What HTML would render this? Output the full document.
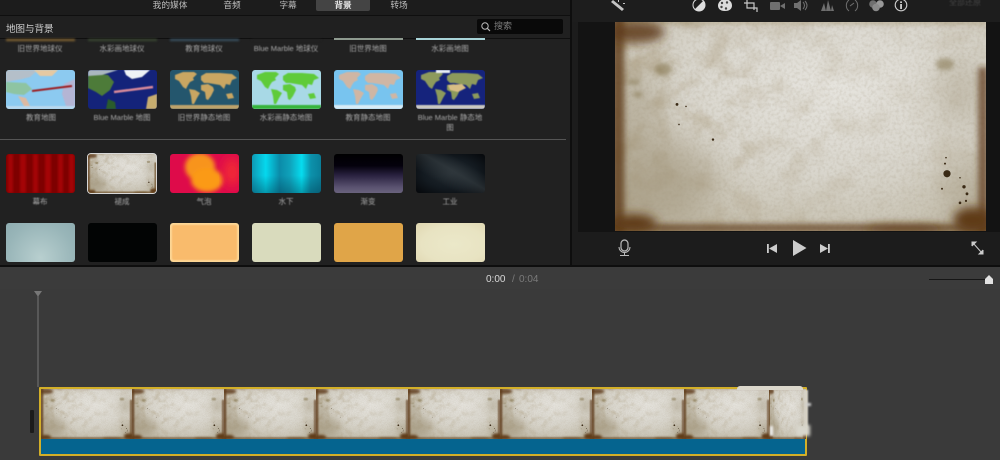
<!DOCTYPE html>
<html>
<head>
<meta charset="utf-8">
<style>
html,body{margin:0;padding:0;background:#3a3a3a}
#r{position:relative;width:1000px;height:460px;overflow:hidden;background:#3a3a3a;font-family:"Liberation Sans","Noto Sans CJK SC",sans-serif}
#r div,#r svg,#r span{position:absolute}
.t{color:#bdbdbd;font-size:8.7px;line-height:10px;text-align:center;white-space:nowrap;filter:blur(.35px)}
.c{width:88px;text-align:center;color:#a9a9a9;font-size:7.5px;line-height:10px;filter:blur(.4px)}
.th{width:69px;height:39px;border-radius:3px;overflow:hidden}
.th svg{filter:blur(.5px)}
svg{display:block}
</style>
</head>
<body>
<div id="r">
<svg width="0" height="0" style="left:0;top:0">
<defs>
<filter id="b2"><feGaussianBlur stdDeviation="2"/></filter>
<filter id="b3" x="-20%" y="-20%" width="140%" height="140%"><feGaussianBlur stdDeviation="3"/></filter>
<filter id="b5" x="-30%" y="-30%" width="160%" height="160%"><feGaussianBlur stdDeviation="5"/></filter>
<filter id="b18" x="-50%" y="-50%" width="200%" height="200%"><feGaussianBlur stdDeviation="18"/></filter>
<filter id="g" x="0" y="0" width="100%" height="100%"><feTurbulence type="fractalNoise" baseFrequency=".32" numOctaves="2" seed="5"/><feColorMatrix values="0 0 0 0 .38 0 0 0 0 .33 0 0 0 0 .24 1.3 0 0 0 -.52"/></filter>
<filter id="g2" x="0" y="0" width="100%" height="100%"><feTurbulence type="fractalNoise" baseFrequency=".035" numOctaves="4" seed="11"/><feColorMatrix values="0 0 0 0 .45 0 0 0 0 .38 0 0 0 0 .26 3 0 0 0 -1.35"/></filter>
<linearGradient id="lf"><stop offset="0" stop-color="#fff"/><stop offset=".45" stop-color="#666"/><stop offset=".75" stop-color="#333"/><stop offset="1" stop-color="#555"/></linearGradient>
<mask id="lm"><rect width="371" height="208" fill="url(#lf)"/></mask>
<radialGradient id="pg" cx=".58" cy=".32" r=".72"><stop offset="0" stop-color="#e6e4de"/><stop offset=".55" stop-color="#d9d6cd"/><stop offset="1" stop-color="#c5bfae"/></radialGradient>
<symbol id="paper" viewBox="0 0 371 208" preserveAspectRatio="none">
<rect width="371" height="208" fill="url(#pg)"/>
<g mask="url(#lm)"><rect width="371" height="208" filter="url(#g2)" opacity=".75"/></g>
<rect width="371" height="208" filter="url(#g)" opacity=".4"/>
<g filter="url(#b18)" fill="#a0947a" opacity=".6">
<ellipse cx="40" cy="160" rx="60" ry="45"/>
<ellipse cx="22" cy="90" rx="20" ry="45"/>
<ellipse cx="345" cy="70" rx="18" ry="35"/>
<ellipse cx="352" cy="170" rx="20" ry="35"/>
</g>
<g filter="url(#b3)" fill="none" stroke="#5f3c17">
<path d="M3 -5V213" stroke-width="13" opacity=".8"/>
<path d="M-5 205H376" stroke-width="8" opacity=".75"/>
<path d="M368 45V213" stroke-width="10" opacity=".72"/>
<path d="M0 0H371" stroke-width="3" opacity=".4"/>
</g>
<g filter="url(#b5)" fill="#5e3b16">
<ellipse cx="22" cy="10" rx="28" ry="11" opacity=".85"/>
<ellipse cx="18" cy="200" rx="24" ry="9"/>
<ellipse cx="358" cy="197" rx="20" ry="13"/>
<ellipse cx="290" cy="206" rx="40" ry="3"/>
</g>
<g fill="#3a2a15">
<circle cx="332" cy="151" r="3.6"/><circle cx="62" cy="82" r="1.4"/><circle cx="98" cy="117" r="1.2"/><circle cx="64" cy="102" r=".8"/><circle cx="71" cy="84" r=".8"/><circle cx="349" cy="164" r="1.7"/><circle cx="352" cy="171" r="1.4"/><circle cx="345" cy="180" r="1.3"/><circle cx="351" cy="178" r="1.1"/><circle cx="327" cy="166" r="1"/><circle cx="330" cy="141" r="1"/><circle cx="331" cy="135" r=".8"/><circle cx="345" cy="155" r=".8"/>
</g>
<g fill="#85764f" opacity=".55" filter="url(#b2)"><ellipse cx="48" cy="47" rx="8" ry="6"/><ellipse cx="19" cy="60" rx="6" ry="3"/><ellipse cx="23" cy="72" rx="5" ry="3"/><ellipse cx="330" cy="42" rx="9" ry="6"/></g>
</symbol>
<symbol id="cont" viewBox="0 0 69 39" preserveAspectRatio="none">
<path d="M5 5 13 2 24 2 27 4 23 8 24 10 20 12 18 15 16 19 13 17 9 11 5 9Z"/>
<path d="M19 19 25 20 30 23 27 28 24 34 22 34 21 26Z"/>
<path d="M31 6 36 3 50 3 62 4 67 8 62 10 60 15 56 14 54 19 50 15 44 14 38 13 34 13 31 10Z"/>
<path d="M31 15 38 14 43 17 44 20 41 26 38 30 36 29 35 22 31 20Z"/>
<path d="M56 24 62 23 64 28 58 29Z"/>
</symbol>
</defs>
</svg>

<!-- Top panel -->
<div style="left:0;top:0;width:1000px;height:265px;background:#1c1c1c"></div>
<div style="left:0;top:265px;width:1000px;height:2px;background:#0e0e0e"></div>
<div style="left:0;top:15px;width:570px;height:1px;background:#0f0f0f"></div>
<div style="left:0;top:38px;width:570px;height:1px;background:#0f0f0f"></div>
<div style="left:570px;top:0;width:2px;height:265px;background:#0e0e0e"></div>
<div style="left:0;top:16px;width:570px;height:22px;background:#202020"></div>
<div style="left:0;top:39px;width:570px;height:226px;background:#212121"></div>

<!-- Tabs -->
<div style="left:316px;top:0;width:54px;height:11px;background:#444;border-radius:0 0 2px 2px"></div>
<div class="t" style="left:150px;top:0;width:40px">我的媒体</div>
<div class="t" style="left:216px;top:0;width:32px">音频</div>
<div class="t" style="left:272px;top:0;width:32px">字幕</div>
<div class="t" style="left:327px;top:0;width:32px;color:#e5e5e5;font-weight:bold">背景</div>
<div class="t" style="left:383px;top:0;width:32px">转场</div>

<div style="left:6px;top:24px;color:#d0d0d0;font-size:9.5px;line-height:12px;filter:blur(.35px);white-space:nowrap">地图与背景</div>

<!-- Search -->
<div style="left:477px;top:19px;width:86px;height:15px;background:#090909;border-radius:2px"></div>
<svg style="left:480px;top:21px" width="12" height="12" viewBox="0 0 12 12"><circle cx="5" cy="5" r="3.2" fill="none" stroke="#bbb" stroke-width="1"/><path d="M7.4 7.4 10 10" stroke="#bbb" stroke-width="1.2"/></svg>
<div style="left:494px;top:21px;color:#7d7d7d;font-size:9px;line-height:11px;filter:blur(.35px)">搜索</div>

<!-- Cropped first row -->
<div style="left:6px;top:39px;width:69px;height:2px;background:#8a6a35;filter:blur(1px)"></div>
<div style="left:88px;top:39px;width:69px;height:2px;background:#3b4a33;filter:blur(1px)"></div>
<div style="left:170px;top:39px;width:69px;height:2px;background:#3b5566;filter:blur(1px)"></div>
<div style="left:252px;top:39px;width:69px;height:1px;background:#222;filter:blur(1px)"></div>
<div style="left:334px;top:38px;width:69px;height:2px;background:#8e9a8f"></div>
<div style="left:416px;top:38px;width:69px;height:2px;background:#a9d4d8"></div>
<div class="c" style="left:-4px;top:44px">旧世界地球仪</div>
<div class="c" style="left:78px;top:44px">水彩画地球仪</div>
<div class="c" style="left:160px;top:44px">教育地球仪</div>
<div class="c" style="left:242px;top:44px">Blue Marble 地球仪</div>
<div class="c" style="left:324px;top:44px">旧世界地图</div>
<div class="c" style="left:406px;top:44px">水彩画地图</div>

<!-- Maps row -->
<div class="th" style="left:6px;top:70px;background:#8ccaf0">
<svg width="69" height="39" viewBox="0 0 69 39">
<path d="M0 0H32L24 7 16 9 0 12Z" fill="#b4bfc9"/><path d="M28 0H52L46 6 34 6Z" fill="#e5c9a2"/>
<path d="M0 12 20 13 26 19 18 25 8 24 0 22Z" fill="#8ec4a2"/><path d="M12 26 20 28 24 36 18 36Z" fill="#dcb9a2"/>
<path d="M58 14 69 9V36H60L56 24Z" fill="#d5a4bd" opacity=".55"/>
<path d="M26 21 66 16" stroke="#9c1f22" stroke-width="2"/>
<rect y="36" width="69" height="3" fill="#b8d8ee"/>
</svg></div>
<div class="th" style="left:88px;top:70px;background:#14237a">
<svg width="69" height="39" viewBox="0 0 69 39">
<path d="M36 0H62L54 7 44 9 38 5Z" fill="#eef2f6"/><path d="M0 3 20 5 26 12 22 20 14 26 8 22 0 18Z" fill="#4d7b39"/><path d="M0 0H30L14 5 0 6Z" fill="#aab7c0"/>
<path d="M20 29 27 32 28 39H18Z" fill="#2a5c2c"/><path d="M60 27 69 24V39H58Z" fill="#c7ad6f"/>
<path d="M26 22 65 17" stroke="#d98a9a" stroke-width="2.4"/>
</svg></div>
<div class="th" style="left:170px;top:70px;background:#24566d">
<svg width="69" height="39" viewBox="0 0 69 39"><use href="#cont" width="69" height="39" fill="#c9a662"/><rect y="35" width="69" height="4" fill="#bda26b"/></svg></div>
<div class="th" style="left:252px;top:70px;background:#a8d9e6">
<svg width="69" height="39" viewBox="0 0 69 39"><use href="#cont" width="69" height="39" fill="#5fcb3a"/><rect y="35" width="69" height="4" fill="#37b43c"/></svg></div>
<div class="th" style="left:334px;top:70px;background:#78c4ef">
<svg width="69" height="39" viewBox="0 0 69 39"><use href="#cont" width="69" height="39" fill="#cfb6a4"/><rect y="35" width="69" height="4" fill="#d8ecf6"/></svg></div>
<div class="th" style="left:416px;top:70px;background:#15237c">
<svg width="69" height="39" viewBox="0 0 69 39"><use href="#cont" width="69" height="39" fill="#8d9a5c"/><path d="M32 15 46 14 50 18 42 22 34 20Z" fill="#d8bd85"/><rect y="35" width="69" height="4" fill="#c9c8c0"/><rect x="20" width="14" height="3" fill="#e8eef4"/></svg></div>
<div class="c" style="left:-3px;top:113px">教育地图</div>
<div class="c" style="left:78px;top:113px">Blue Marble 地图</div>
<div class="c" style="left:160px;top:113px">旧世界静态地图</div>
<div class="c" style="left:242px;top:113px">水彩画静态地图</div>
<div class="c" style="left:324px;top:113px">教育静态地图</div>
<div class="c" style="left:406px;top:113px;line-height:9.5px">Blue Marble 静态地<br>图</div>

<div style="left:0;top:139px;width:566px;height:1px;background:#555"></div>

<!-- Backgrounds row -->
<div class="th" style="left:6px;top:154px;background:#7e0001">
<svg width="69" height="39" style="filter:blur(1px)"><g fill="#a40406"><rect x="2" width="5" height="39"/><rect x="14" width="6" height="39"/><rect x="27" width="5" height="39"/><rect x="39" width="6" height="39"/><rect x="52" width="5" height="39"/><rect x="63" width="5" height="39"/></g></svg></div>
<div class="th" style="left:87px;top:153px;width:68px;height:39px;border:1.5px solid #d8d8d8;border-radius:4px;background:#ccc">
<svg width="68" height="39" style="left:0;top:0;filter:none"><use href="#paper" width="68" height="39"/></svg></div>
<div class="th" style="left:170px;top:154px;background:#de0b4a">
<svg width="69" height="39" style="filter:none"><g filter="url(#b2)"><ellipse cx="30" cy="13" rx="15" ry="14" fill="#f8941c"/><ellipse cx="37" cy="26" rx="16" ry="12" fill="#fb9a17"/></g><ellipse cx="62" cy="18" rx="8" ry="14" fill="#f22a35" filter="url(#b5)"/></svg></div>
<div class="th" style="left:252px;top:154px;background:linear-gradient(180deg,rgba(0,0,0,0) 55%,rgba(0,40,60,.35) 100%),linear-gradient(90deg,#0f99b4 0,#05d8ee 20%,#0b8ba8 40%,#0fa2bb 55%,#06dcef 72%,#0c92ac 85%,#0a7e98 100%)"></div>
<div class="th" style="left:334px;top:154px;background:linear-gradient(180deg,#000 0,#04010c 30%,#2a2240 55%,#5a5270 85%,#6a637d 100%)"></div>
<div class="th" style="left:416px;top:154px;background:linear-gradient(30deg,rgba(0,0,0,0) 30%,rgba(60,68,72,.55) 55%,rgba(0,0,0,0) 75%),radial-gradient(ellipse at 50% 50%,#222a30 0,#131a20 55%,#05070a 100%)"></div>
<div class="c" style="left:-4px;top:197px">幕布</div>
<div class="c" style="left:78px;top:197px">褪成</div>
<div class="c" style="left:160px;top:197px">气泡</div>
<div class="c" style="left:242px;top:197px">水下</div>
<div class="c" style="left:324px;top:197px">渐变</div>
<div class="c" style="left:406px;top:197px">工业</div>

<!-- Bottom row -->
<div class="th" style="left:6px;top:223px;background:radial-gradient(ellipse at 50% 90%,#b8cfcf 0,#98b5b8 70%,#8fadb1 100%)"></div>
<div class="th" style="left:88px;top:223px;background:#020404"></div>
<div class="th" style="left:170px;top:223px;background:#fcd695">
<div style="left:2px;top:2px;width:65px;height:35px;background:#f9bb6c;border-radius:2px;filter:blur(.6px)"></div></div>
<div class="th" style="left:252px;top:223px;background:#d9dbbd"></div>
<div class="th" style="left:334px;top:223px;background:#e0a548"></div>
<div class="th" style="left:416px;top:223px;background:radial-gradient(ellipse at 55% 55%,#ebe8c9 0,#e8e3c2 60%,#dfd6b0 100%)"></div>

<!-- Preview -->
<div style="left:572px;top:0;width:428px;height:22px;background:#1d1d1d"></div>
<div style="left:578px;top:22px;width:422px;height:210px;background:#131313"></div>
<svg style="left:615px;top:22px" width="371" height="209"><use href="#paper" width="371" height="209"/></svg>

<!-- Toolbar icons -->
<svg style="left:570px;top:0;filter:blur(.35px)" width="430" height="20" viewBox="0 0 430 20">
<g fill="#c4c4c4" stroke="none">
<path d="M43 0 54 9 52 11 41 2Z"/><path d="M48 0h1v2h-1zM53 3h2v1h-2z"/>
<circle cx="129" cy="5" r="6" fill="none" stroke="#ddd" stroke-width="1"/><path d="M124.800 9.300 133.300 .8A6 6 0 0 1 124.800 9.300Z" fill="#ddd"/>
<path d="M155 -1a7 6.500 0 0 1 7 6.500c0 3-2 5.500-7 5.500s-7-2.500-7-5.500 3-6.500 7-6.500Z" fill="#dcdcdc"/>
<circle cx="151.500" cy="7" r="1.200" fill="#444"/><circle cx="156" cy="8.500" r="1.200" fill="#444"/><circle cx="152" cy="3" r="1.200" fill="#444"/><circle cx="157" cy="2.500" r="1.200" fill="#444"/>
</g>
<g fill="none" stroke="#c8c8c8" stroke-width="1.200"><path d="M177 0V8H187V12M174 3H184V10"/></g>
<g fill="#6f6f6f">
<rect x="200" y="2" width="10" height="8" rx="1"/><path d="M210 6 215 3V9Z"/>
<path d="M224 3h3l4-3v11l-4-3h-3Z"/><path d="M233 2q3 3.500 0 7M235 1q4 4.500 0 9" fill="none" stroke="#6f6f6f"/>
<path d="M251 11 254 3 256 11ZM256 11 258 0 261 11ZM261 11 262 5 264 11Z"/>
<path d="M279 0a7 7 0 0 0 0 11M285 0a7 7 0 0 1 0 11" fill="none" stroke="#6f6f6f"/><path d="M280 6 284 3" stroke="#6f6f6f"/>
<circle cx="303" cy="4" r="3.800"/><circle cx="310" cy="4" r="3.800" fill="#999"/><circle cx="306" cy="7.500" r="3.800" fill="#8a8a8a"/>
</g>
<circle cx="331" cy="5" r="5.800" fill="none" stroke="#ccc" stroke-width="1.100"/>
<rect x="330.200" y="4" width="1.700" height="5" fill="#ddd"/><rect x="330.200" y="1.400" width="1.700" height="1.600" fill="#ddd"/>
</svg>
<div style="left:949px;top:-2px;color:#444;font-size:8px;line-height:10px;filter:blur(.4px);white-space:nowrap">全部还原</div>

<!-- Transport -->
<svg style="left:570px;top:232px;filter:blur(.3px)" width="430" height="33" viewBox="0 0 430 33">
<rect x="51" y="8" width="7" height="11" rx="3.500" fill="none" stroke="#bbb" stroke-width="1.200"/>
<path d="M49 15a5.500 5.500 0 0 0 11 0M54.500 20V23M50 23.500H59" fill="none" stroke="#bbb"/>
<rect x="197" y="12" width="1.800" height="9" fill="#ccc"/><path d="M207 12V21L199 16.500Z" fill="#ccc"/>
<path d="M223 8V24L236.500 16Z" fill="#ccc"/>
<path d="M250 12V21L258 16.500Z" fill="#ccc"/><rect x="258" y="12" width="1.800" height="9" fill="#ccc"/>
<path d="M402 10 H406 L402.500 13.500ZM402 10V14M413 22H409L412.500 18.500ZM413 22V18M403.500 11.500 411.500 20.500" fill="#ccc" stroke="#ccc"/>
</svg>

<!-- Timeline -->
<div style="left:0;top:267px;width:1000px;height:22px;background:#3b3b3b"></div>
<div style="left:486px;top:274px;color:#d8d8d8;font-size:10px;line-height:12px;filter:blur(.3px)">0:00</div>
<div style="left:512px;top:274px;color:#7b7b7b;font-size:10px;line-height:12px;filter:blur(.3px)">/</div>
<div style="left:519px;top:274px;color:#7b7b7b;font-size:10px;line-height:12px;filter:blur(.3px)">0:04</div>
<div style="left:929px;top:279px;width:56px;height:1px;background:#161616"></div>
<svg style="left:984px;top:274px" width="10" height="11" viewBox="0 0 10 11"><path d="M1 10V5L5 1 9 5V10Z" fill="#e2e2e2"/></svg>
<svg style="left:33px;top:289px" width="10" height="100" viewBox="0 0 10 100"><path d="M1 2H9L5.500 7V98H4.500V7Z" fill="#777"/></svg>
<div style="left:30px;top:410px;width:4px;height:23px;background:#1b1b1b;border-radius:1px"></div>

<!-- Clip -->
<div style="left:39px;top:387px;width:768px;height:69px;background:#05648f;box-sizing:border-box;border:2px solid #d3af28;border-radius:1px"></div>
<svg style="left:41px;top:389px" width="765" height="50" viewBox="0 0 765 50">
<use href="#paper" x="0" width="91" height="50"/><use href="#paper" x="91" width="92" height="50"/><use href="#paper" x="183" width="92" height="50"/><use href="#paper" x="275" width="92" height="50"/><use href="#paper" x="367" width="92" height="50"/><use href="#paper" x="459" width="92" height="50"/><use href="#paper" x="551" width="92" height="50"/><use href="#paper" x="643" width="85" height="50"/><use href="#paper" x="728" width="37" height="50"/>
</svg>
<div style="left:737px;top:386px;width:66px;height:4px;background:#dcd8cc;border-radius:3px 3px 0 0"></div>
<div style="left:804px;top:390px;width:4px;height:38px;background:#d6d2c6;filter:blur(.8px)"></div>
<div style="left:806px;top:403px;width:5px;height:3px;background:#cfcfcf;filter:blur(1px)"></div>
<div style="left:796px;top:425px;width:14px;height:11px;background:#d8d6cc;filter:blur(1.5px)"></div>
<div style="left:770px;top:426px;width:3px;height:10px;background:#f0f0f0;filter:blur(1px)"></div>
</div>
</body>
</html>
